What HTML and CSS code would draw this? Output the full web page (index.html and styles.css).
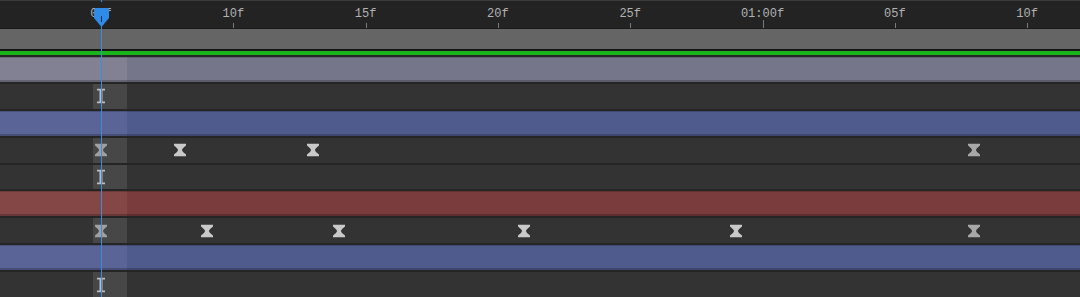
FILE: index.html
```html
<!DOCTYPE html>
<html>
  <head>
    <title>Timeline</title>
    <link rel="stylesheet" href="styles.css">
  </head>
  <body>
    <div class="timeline">
      <div class="ruler">
        <div class="tick" style="--f:5"><span>05f</span></div>
        <div class="tick" style="--f:10"><span>10f</span></div>
        <div class="tick" style="--f:15"><span>15f</span></div>
        <div class="tick" style="--f:20"><span>20f</span></div>
        <div class="tick" style="--f:25"><span>25f</span></div>
        <div class="tick major" style="--f:30"><span>01:00f</span></div>
        <div class="tick" style="--f:35"><span>05f</span></div>
        <div class="tick" style="--f:40"><span>10f</span></div>
      </div>
      <div class="workarea"></div>
      <div class="range"></div>

      <div class="tracks">
        <div class="track layer lavender"></div>
        <div class="track prop">
          <svg class="beam" width="8" height="15" viewBox="0 0 8 15"><path d="M0 0H8V2H5.5V13H8V15H0V13H2.5V2H0Z"/></svg>
        </div>
        <div class="track layer blue"></div>
        <div class="track prop">
          <svg class="key dim" style="--f:5" width="12" height="13" viewBox="0 0 12 13"><path d="M0 0H12V2Q8 5 8 6.5Q8 8 12 11V13H0V11Q4 8 4 6.5Q4 5 0 2Z"/></svg>
          <svg class="key" style="--f:8" width="12" height="13" viewBox="0 0 12 13"><path d="M0 0H12V2Q8 5 8 6.5Q8 8 12 11V13H0V11Q4 8 4 6.5Q4 5 0 2Z"/></svg>
          <svg class="key" style="--f:13" width="12" height="13" viewBox="0 0 12 13"><path d="M0 0H12V2Q8 5 8 6.5Q8 8 12 11V13H0V11Q4 8 4 6.5Q4 5 0 2Z"/></svg>
          <svg class="key last" style="--f:38" width="12" height="13" viewBox="0 0 12 13"><path d="M0 0H12V2Q8 5 8 6.5Q8 8 12 11V13H0V11Q4 8 4 6.5Q4 5 0 2Z"/></svg>
        </div>
        <div class="track prop">
          <svg class="beam" width="8" height="15" viewBox="0 0 8 15"><path d="M0 0H8V2H5.5V13H8V15H0V13H2.5V2H0Z"/></svg>
        </div>
        <div class="track layer red"></div>
        <div class="track prop">
          <svg class="key dim" style="--f:5" width="12" height="13" viewBox="0 0 12 13"><path d="M0 0H12V2Q8 5 8 6.5Q8 8 12 11V13H0V11Q4 8 4 6.5Q4 5 0 2Z"/></svg>
          <svg class="key" style="--f:9" width="12" height="13" viewBox="0 0 12 13"><path d="M0 0H12V2Q8 5 8 6.5Q8 8 12 11V13H0V11Q4 8 4 6.5Q4 5 0 2Z"/></svg>
          <svg class="key" style="--f:14" width="12" height="13" viewBox="0 0 12 13"><path d="M0 0H12V2Q8 5 8 6.5Q8 8 12 11V13H0V11Q4 8 4 6.5Q4 5 0 2Z"/></svg>
          <svg class="key" style="--f:21" width="12" height="13" viewBox="0 0 12 13"><path d="M0 0H12V2Q8 5 8 6.5Q8 8 12 11V13H0V11Q4 8 4 6.5Q4 5 0 2Z"/></svg>
          <svg class="key" style="--f:29" width="12" height="13" viewBox="0 0 12 13"><path d="M0 0H12V2Q8 5 8 6.5Q8 8 12 11V13H0V11Q4 8 4 6.5Q4 5 0 2Z"/></svg>
          <svg class="key last" style="--f:38" width="12" height="13" viewBox="0 0 12 13"><path d="M0 0H12V2Q8 5 8 6.5Q8 8 12 11V13H0V11Q4 8 4 6.5Q4 5 0 2Z"/></svg>
        </div>
        <div class="track layer blue"></div>
        <div class="track prop">
          <svg class="beam" width="8" height="15" viewBox="0 0 8 15"><path d="M0 0H8V2H5.5V13H8V15H0V13H2.5V2H0Z"/></svg>
        </div>
      </div>

      <!-- current time indicator -->
      <div class="playhead">
        <svg class="handle" width="15" height="19" viewBox="0 0 15 19">
          <path d="M2 0H13Q15 0 15 2V10L7.5 19L0 10V2Q0 0 2 0Z" fill="#2f8ae8"/>
          <rect x="7" y="8" width="1" height="6" fill="#17324f"/>
        </svg>
      </div>
    </div>
  </body>
</html>
```

FILE: styles.css
```css
html, body { margin: 0; padding: 0; background: #333; }

.timeline {
  --px: 26.46px;
  position: relative;
  width: 1080px;
  height: 297px;
  display: flex;
  flex-direction: column;
  overflow: hidden;
  font-family: "Liberation Mono", monospace;
}

.ruler {
  position: relative;
  height: 27px;
  flex: none;
  background: #232323;
  border-top: 1px solid #3a3a3a;
  border-bottom: 1px solid #1a1a1a;
}
.tick {
  position: absolute;
  top: 0;
  bottom: 0;
  left: calc(101px + (var(--f) - 5) * var(--px));
  width: 1px;
}
.tick span {
  position: absolute;
  top: 6px;
  left: 0;
  transform: translateX(-50%);
  font-size: 12px;
  line-height: 14px;
  color: #b2b2b2;
  white-space: nowrap;
}
.tick::after {
  content: "";
  position: absolute;
  left: 0;
  bottom: 0;
  width: 1px;
  height: 5px;
  background: #7a7a7a;
}
.tick.major::after { height: 8px; }

.workarea { height: 20px; flex: none; background: #656565; border-bottom: 2px solid #151515; }
.range { height: 4px; flex: none; background: #1bb31b; }

.tracks { flex: 1; display: flex; flex-direction: column; }
.track {
  position: relative;
  flex: 1;
  border-top: 2px solid #252525;
}
.prop {
  background: linear-gradient(to right, #333 0 93px, #474747 93px 127px, #333 127px);
}
.layer { box-shadow: inset 0 1px 0 rgba(0, 0, 0, 0.18), inset 0 -2px 0 rgba(0, 0, 0, 0.22); }
.lavender { background: linear-gradient(to right, #818193 0 127px, #76768a 127px); }
.blue { background: linear-gradient(to right, #5a6496 0 127px, #4f5a8d 127px); }
.red { background: linear-gradient(to right, #854646 0 127px, #7a3c3c 127px); }

.beam {
  position: absolute;
  left: 97px;
  top: 50%;
  transform: translateY(-50%);
  fill: #bdbdbd;
}
.key {
  position: absolute;
  left: calc(95px + (var(--f) - 5) * var(--px));
  top: 50%;
  transform: translateY(-50%);
  fill: #c9c9c9;
}
.key.dim { fill: #a0a0a0; }
.key.last { fill: #a8a8a8; }

.playhead {
  position: absolute;
  left: 101px;
  top: 0;
  bottom: 0;
  width: 1px;
  background: linear-gradient(to bottom, #3b8be0 0 2px, transparent 2px 10px, #3b8be0 10px);
}
.handle {
  position: absolute;
  left: -7px;
  top: 8px;
}
```
